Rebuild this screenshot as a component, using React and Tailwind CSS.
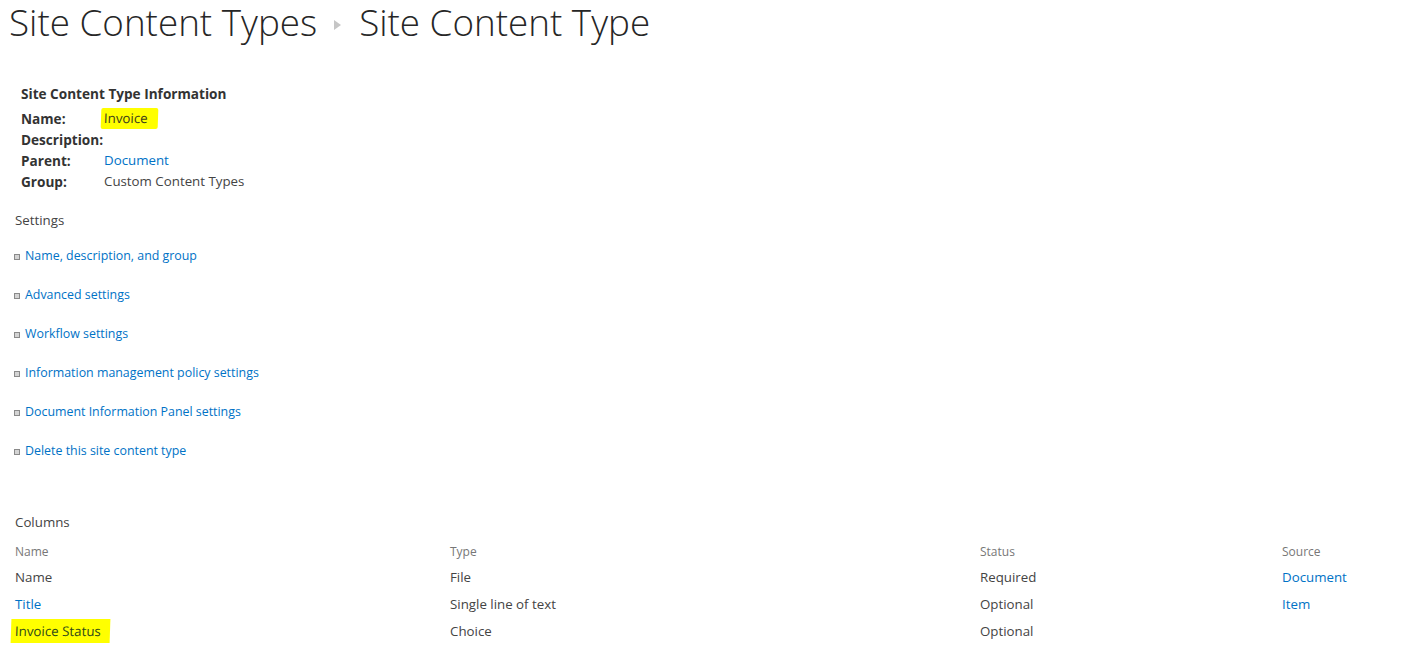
import React from 'react';

const FONT = { fontFamily: '"Open Sans", "Noto Sans", sans-serif' };

const info = [
  { label: 'Name:', value: 'Invoice', kind: 'mark' },
  { label: 'Description:', value: '' },
  { label: 'Parent:', value: 'Document', kind: 'link' },
  { label: 'Group:', value: 'Custom Content Types' },
];

const settings = [
  'Name, description, and group',
  'Advanced settings',
  'Workflow settings',
  'Information management policy settings',
  'Document Information Panel settings',
  'Delete this site content type',
];

const columns = [
  { name: 'Name', type: 'File', status: 'Required', source: 'Document' },
  { name: 'Title', type: 'Single line of text', status: 'Optional', source: 'Item', nameLink: true },
  { name: 'Invoice Status', type: 'Choice', status: 'Optional', source: '', mark: true },
];

const Bullet = () => (
  <span className="inline-block w-[6px] h-[6px] border border-[#8a8a8a] bg-[#d4d4d4] mr-[5px]" />
);

export default function App() {
  return (
    <div className="w-[1428px] h-[654px] bg-white text-[#444] overflow-hidden text-[13.3px]" style={FONT}>
      {/* Breadcrumb title */}
      <div className="flex items-center pl-[9px] h-[44px] text-[36.8px] font-light text-[#262626] leading-[44px]">
        <span>Site Content Types</span>
        <svg width="7" height="10" viewBox="0 0 7 10" className="ml-[17px] mr-[18px] mt-[6px]">
          <path d="M0 0 L7 5 L0 10 Z" fill="#c6c6c6" />
        </svg>
        <span>Site Content Type</span>
      </div>

      {/* Information */}
      <div className="pl-[21px] mt-[39px]">
        <div className="font-bold text-[13.6px] text-[#333] h-[25px] leading-[21px]">Site Content Type Information</div>
        {info.map((row) => (
          <div key={row.label} className="flex h-[21px] leading-[21px]">
            <span className="w-[83px] font-bold text-[13.6px] text-[#333]">{row.label}</span>
            {row.kind === 'mark' && (
              <span className="bg-[#ffff00] -ml-[3px] pl-[3px] pr-[10px] text-[#3d3d1a] rounded-[2px] -skew-x-2">{row.value}</span>
            )}
            {row.kind === 'link' && <span className="text-[#0072c6]">{row.value}</span>}
            {!row.kind && <span>{row.value}</span>}
          </div>
        ))}
      </div>

      {/* Settings */}
      <div className="pl-[15px] mt-[18px] h-[21px] leading-[21px] text-[#444]">Settings</div>
      <div className="pl-[14px] mt-[6px]">
        {settings.map((s) => (
          <div key={s} className="flex items-center h-[39px] text-[#0072c6] text-[12.4px]">
            <Bullet />
            <span>{s}</span>
          </div>
        ))}
      </div>

      {/* Columns */}
      <div className="pl-[15px] mt-[41px] h-[21px] leading-[21px]">Columns</div>
      <div className="grid grid-cols-[435px_530px_302px_1fr] pl-[15px] mt-[7px]">
        <div className="text-[12px] text-[#777] h-[24px] leading-[24px]">Name</div>
        <div className="text-[12px] text-[#777] h-[24px] leading-[24px]">Type</div>
        <div className="text-[12px] text-[#777] h-[24px] leading-[24px]">Status</div>
        <div className="text-[12px] text-[#777] h-[24px] leading-[24px]">Source</div>
        {columns.map((c) => (
          <React.Fragment key={c.name}>
            <div className="h-[27px] leading-[27px]">
              {c.mark ? (
                <span className="bg-[#ffff00] -ml-[4px] pl-[4px] pr-[9px] py-[3px] text-[#2f4a1a] -skew-x-2 inline-block leading-[18px]">
                  {c.name}
                </span>
              ) : (
                <span className={c.nameLink ? 'text-[#0072c6]' : ''}>{c.name}</span>
              )}
            </div>
            <div className="h-[27px] leading-[27px]">{c.type}</div>
            <div className="h-[27px] leading-[27px]">{c.status}</div>
            <div className="h-[27px] leading-[27px] text-[#0072c6]">{c.source}</div>
          </React.Fragment>
        ))}
      </div>
    </div>
  );
}
